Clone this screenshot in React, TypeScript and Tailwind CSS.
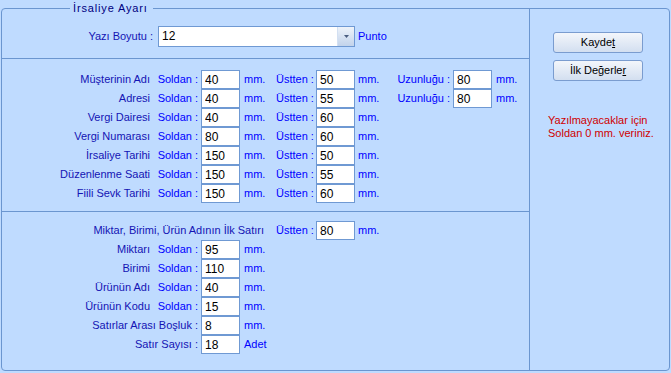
import React from "react";

const LBL = "whitespace-nowrap text-right text-[#1414b4]";
const BLU = "whitespace-nowrap text-[#0000ff]";

function Num({ v, className = "" }: { v: string; className?: string }) {
  return (
    <input
      readOnly
      value={v}
      className={`h-[19px] w-[39px] shrink-0 border border-[#6f99d3] bg-white px-[3px] text-[12px] leading-[17px] text-black outline-none ${className}`}
    />
  );
}

function PosRow({ label, sol, ust, uz }: { label: string; sol: string; ust: string; uz?: string }) {
  return (
    <div className="flex h-[19px] items-center">
      <span className={`w-[148px] ${LBL}`}>{label}</span>
      <span className={`w-[48px] text-right ${BLU}`}>Soldan :</span>
      <Num v={sol} className="ml-[3px]" />
      <span className={`w-[36px] pl-[4px] ${BLU}`}>mm.</span>
      <span className={`w-[37px] text-right ${BLU}`}>Üstten :</span>
      <Num v={ust} className="ml-[3px]" />
      <span className={`w-[40px] pl-[3px] ${BLU}`}>mm.</span>
      {uz && (
        <>
          <span className={`w-[55px] text-right ${BLU}`}>Uzunluğu :</span>
          <Num v={uz} className="ml-[3px]" />
          <span className={`pl-[4px] ${BLU}`}>mm.</span>
        </>
      )}
    </div>
  );
}

function SolRow({ label, sol, unit = "mm." }: { label: string; sol: string; unit?: string }) {
  return (
    <div className="flex h-[19px] items-center">
      <span className={`w-[148px] ${LBL}`}>{label}</span>
      <span className={`w-[48px] text-right ${BLU}`}>Soldan :</span>
      <Num v={sol} className="ml-[3px]" />
      <span className={`pl-[4px] ${BLU}`}>{unit}</span>
    </div>
  );
}

function PlainRow({ label, v, unit }: { label: string; v: string; unit: string }) {
  return (
    <div className="flex h-[19px] items-center">
      <span className={`w-[196px] ${LBL}`}>{label}</span>
      <Num v={v} className="ml-[3px]" />
      <span className={`pl-[4px] ${BLU}`}>{unit}</span>
    </div>
  );
}

export default function App() {
  const rows = [
    { label: "Müşterinin Adı", sol: "40", ust: "50", uz: "80" },
    { label: "Adresi", sol: "40", ust: "55", uz: "80" },
    { label: "Vergi Dairesi", sol: "40", ust: "60" },
    { label: "Vergi Numarası", sol: "80", ust: "60" },
    { label: "İrsaliye Tarihi", sol: "150", ust: "50" },
    { label: "Düzenlenme Saati", sol: "150", ust: "55" },
    { label: "Fiili Sevk Tarihi", sol: "150", ust: "60" },
  ];

  return (
    <div className="h-[373px] w-[671px] bg-[#bfdbff] pl-[1px] pt-[8px] font-['Liberation_Sans',Arial,sans-serif] text-[11px] leading-[19px]">
      <div className="relative flex h-[363px] w-[669px] rounded-[4px] border border-[#6b96d0]">
        <span className="absolute -top-[8px] left-[68px] bg-[#bfdbff] pl-[3px] pr-[5px] text-[11px] leading-[14px] tracking-[0.85px] text-[#000080]">
          İrsaliye Ayarı
        </span>

        <div className="flex w-[528px] flex-col border-r border-[#6b96d0]">
          {/* yazı boyutu */}
          <div className="flex h-[50px] border-b border-[#6b96d0] pt-[17px]">
            <div className="flex h-[21px] items-center">
              <span className={`w-[151px] ${LBL}`}>Yazı Boyutu :</span>
              <div className="ml-[5px] flex h-[21px] w-[197px] border border-[#6f99d3] bg-white">
                <span className="flex-1 pl-[3px] text-[12px] leading-[19px] text-black">12</span>
                <span className="flex w-[17px] items-center justify-center border-l border-[#d3e0f2] bg-linear-to-b from-[#eef3fa] to-[#c2d3eb]">
                  <svg width="5" height="3" viewBox="0 0 5 3">
                    <path d="M0 0h5L2.5 3z" fill="#4a5d80" />
                  </svg>
                </span>
              </div>
              <span className={`pl-[3px] ${BLU}`}>Punto</span>
            </div>
          </div>

          {/* alan konumları */}
          <div className="flex h-[153px] flex-col border-b border-[#6b96d0] pt-[11px]">
            {rows.map((r) => (
              <PosRow key={r.label} {...r} />
            ))}
          </div>

          {/* ürün satırları */}
          <div className="flex flex-1 flex-col pt-[9px]">
            <div className="flex h-[19px] items-center">
              <span className={`w-[262px] ${LBL}`}>Miktar, Birimi, Ürün Adının İlk Satırı</span>
              <span className={`ml-[12px] w-[37px] text-right ${BLU}`}>Üstten :</span>
              <Num v="80" className="ml-[3px]" />
              <span className={`pl-[3px] ${BLU}`}>mm.</span>
            </div>
            <SolRow label="Miktarı" sol="95" />
            <SolRow label="Birimi" sol="110" />
            <SolRow label="Ürünün Adı" sol="40" />
            <SolRow label="Ürünün Kodu" sol="15" />
            <PlainRow label="Satırlar Arası Boşluk :" v="8" unit="mm." />
            <PlainRow label="Satır Sayısı :" v="18" unit="Adet" />
          </div>
        </div>

        <div className="flex flex-1 flex-col pt-[23px]">
          <button className="ml-[23px] h-[21px] w-[90px] rounded-[3px] border border-[#7a9ccf] bg-linear-to-b from-[#f3f6fb] to-[#d3dff0] text-[11px] leading-[19px] text-black">
            Kayde<u>t</u>
          </button>
          <button className="ml-[23px] mt-[7px] h-[21px] w-[90px] rounded-[3px] border border-[#7a9ccf] bg-linear-to-b from-[#f3f6fb] to-[#d3dff0] text-[11px] leading-[19px] text-black">
            İlk Değerle<u>r</u>
          </button>
          <p className="ml-[18px] mt-[33px] text-[11px] leading-[13px] text-[#d00000]">
            Yazılmayacaklar için
            <br />
            Soldan 0 mm. veriniz.
          </p>
        </div>
      </div>
    </div>
  );
}
